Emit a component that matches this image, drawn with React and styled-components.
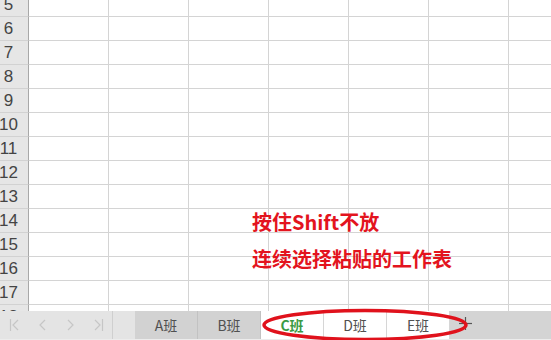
import React from 'react';
import styled, { createGlobalStyle } from 'styled-components';

const GlobalStyle = createGlobalStyle`
    html, body {
        margin: 0;
        padding: 0;
        background: #fff;
    }
    body {
        font-family: "Noto Sans CJK SC", "Liberation Sans", sans-serif;
    }
`

const rows = [5, 6, 7, 8, 9, 10, 11, 12, 13, 14, 15, 16, 17, 18];
const cols = [1, 2, 3, 4, 5, 6, 7];
const tabs = [
    { id: 'A', label: 'A班', selected: false },
    { id: 'B', label: 'B班', selected: false },
    { id: 'C', label: 'C班', selected: true, active: true },
    { id: 'D', label: 'D班', selected: true },
    { id: 'E', label: 'E班', selected: true },
];

const Screen = styled.div`
    position: relative;
    width: 551px;
    height: 340px;
    overflow: hidden;
    display: flex;
    flex-direction: column;
`

const Sheet = styled.div`
    height: 311px;
    overflow: hidden;
`

const Grid = styled.div`
    margin-top: -7px;
    display: flex;
    flex-direction: column;
`

const Row = styled.div`
    display: flex;
    height: 24px;
`

// header column is cropped on the left, so numbers sit centred near x=8
const RowHead = styled.div`
    box-sizing: border-box;
    flex: 0 0 29px;
    min-width: 0;
    height: 24px;
    padding-right: 11px;
    display: flex;
    justify-content: center;
    align-items: center;
    background: #e6e6e6;
    border-right: 1px solid #a8a8a8;
    border-bottom: 1px solid #d2d2d2;
    color: #444;
    font-family: "Liberation Sans", sans-serif;
    font-size: 17px;
    white-space: nowrap;
`

const Cell = styled.div`
    box-sizing: border-box;
    flex: 0 0 80px;
    height: 24px;
    border-right: 1px solid #d4d4d4;
    border-bottom: 1px solid #d4d4d4;
`

const Note = styled.div`
    position: absolute;
    left: 252px;
    top: 203px;
    color: #e3141e;
    font-family: "Noto Sans CJK SC", sans-serif;
    font-weight: 700;
    font-size: 20px;
    line-height: 37px;
`

const TabBar = styled.div`
    height: 29px;
    display: flex;
    background: #d4d4d4;
    border-bottom: 1px solid #ececec;
    box-sizing: border-box;
`

const Nav = styled.div`
    flex: 0 0 135px;
    display: flex;
    align-items: center;
    background: #e4e4e4;
`

const NavButtons = styled.div`
    width: 113px;
    height: 100%;
    display: flex;
    align-items: center;
    justify-content: space-around;
    border-right: 1px solid #cfcfcf;
    box-sizing: border-box;
    padding: 0 2px;
`

const Tab = styled.div`
    flex: 0 0 63px;
    display: flex;
    align-items: center;
    justify-content: center;
    box-sizing: border-box;
    background: ${(p) => (p.selected ? '#fff' : '#d2d2d2')};
    border-right: 1px solid ${(p) => (p.selected ? '#d6d6d6' : '#c2c2c2')};
    color: ${(p) => (p.active ? '#3b9a44' : '#505050')};
    font-weight: ${(p) => (p.active ? 700 : 400)};
    font-size: 14px;
`

const AddTab = styled.div`
    width: 30px;
    display: flex;
    align-items: center;
    justify-content: center;
    padding-bottom: 4px;
`

const Ring = styled.svg`
    position: absolute;
    left: 0;
    top: 0;
    pointer-events: none;
`

const Chevron = ({ dir, bar }) => (
    <svg width="14" height="14" viewBox="0 0 14 14">
        <g fill="none" stroke="#c6c6c6" strokeWidth="1.2">
            {dir === 'left'
                ? <polyline points="9,2 4,7 9,12" />
                : <polyline points="5,2 10,7 5,12" />}
            {bar && (dir === 'left'
                ? <line x1="1.5" y1="1" x2="1.5" y2="13" />
                : <line x1="12.5" y1="1" x2="12.5" y2="13" />)}
        </g>
    </svg>
)

const App = () => {
    return (
        <Screen>
            <GlobalStyle />
            <Sheet>
                <Grid>
                    {rows.map(r => (
                        <Row key={r}>
                            <RowHead><span>{r}</span></RowHead>
                            {cols.map(c => <Cell key={c} />)}
                        </Row>
                    ))}
                </Grid>
            </Sheet>

            <Note>
                <div>按住Shift不放</div>
                <div>连续选择粘贴的工作表</div>
            </Note>

            <TabBar>
                <Nav>
                    <NavButtons>
                        <Chevron dir="left" bar />
                        <Chevron dir="left" />
                        <Chevron dir="right" />
                        <Chevron dir="right" bar />
                    </NavButtons>
                </Nav>
                {tabs.map(t => (
                    <Tab key={t.id} selected={t.selected} active={t.active}>
                        {t.label}
                    </Tab>
                ))}
                <AddTab>
                    <svg width="13" height="13" viewBox="0 0 13 13">
                        <g stroke="#555" strokeWidth="1.2">
                            <line x1="6.5" y1="0" x2="6.5" y2="13" />
                            <line x1="0" y1="6.5" x2="13" y2="6.5" />
                        </g>
                    </svg>
                </AddTab>
            </TabBar>

            <Ring width="551" height="340" viewBox="0 0 551 340">
                <ellipse cx="365" cy="325" rx="101" ry="14.5" fill="none" stroke="#e0121c" strokeWidth="3.5" />
            </Ring>
        </Screen>
    )
}

export default App
